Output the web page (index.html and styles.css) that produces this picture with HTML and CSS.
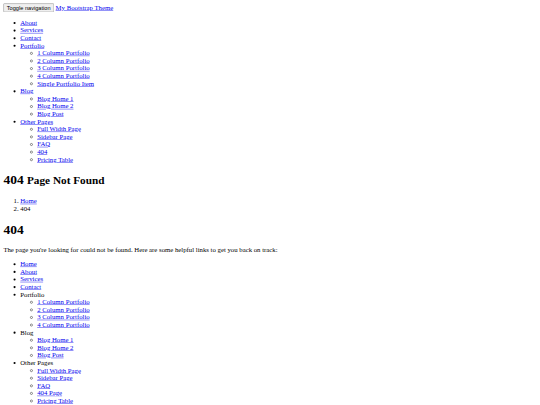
FILE: index.html
```html
<!DOCTYPE html>
<html lang="en">
<head>
<meta charset="utf-8">
<title>404 - My Bootstrap Theme</title>
<link rel="stylesheet" href="styles.css">
</head>
<body class="page-body">
<div class="page">
<nav class="navbar">
  <div class="navbar-header">
    <button type="button" class="navbar-toggle">Toggle navigation</button>
    <a class="navbar-brand" href="#">My Bootstrap Theme</a>
  </div>
  <ul class="list">
    <li><a href="#">About</a></li>
    <li><a href="#">Services</a></li>
    <li><a href="#">Contact</a></li>
    <li><a href="#">Portfolio</a>
      <ul class="list sub">
        <li><a href="#">1 Column Portfolio</a></li>
        <li><a href="#">2 Column Portfolio</a></li>
        <li><a href="#">3 Column Portfolio</a></li>
        <li><a href="#">4 Column Portfolio</a></li>
        <li><a href="#">Single Portfolio Item</a></li>
      </ul>
    </li>
    <li><a href="#">Blog</a>
      <ul class="list sub">
        <li><a href="#">Blog Home 1</a></li>
        <li><a href="#">Blog Home 2</a></li>
        <li><a href="#">Blog Post</a></li>
      </ul>
    </li>
    <li><a href="#">Other Pages</a>
      <ul class="list sub">
        <li><a href="#">Full Width Page</a></li>
        <li><a href="#">Sidebar Page</a></li>
        <li><a href="#">FAQ</a></li>
        <li><a href="#">404</a></li>
        <li><a href="#">Pricing Table</a></li>
      </ul>
    </li>
  </ul>
</nav>

<div class="container">
  <h1 class="page-header">404 <small class="page-sub">Page Not Found</small></h1>
  <ol class="list breadcrumb">
    <li><a href="#">Home</a></li>
    <li>404</li>
  </ol>

  <div class="jumbotron">
    <h1 class="page-header">404</h1>
    <p class="lead">The page you're looking for could not be found. Here are some helpful links to get you back on track:</p>
    <ul class="list">
      <li><a href="#">Home</a></li>
      <li><a href="#">About</a></li>
      <li><a href="#">Services</a></li>
      <li><a href="#">Contact</a></li>
      <li>Portfolio
        <ul class="list sub">
          <li><a href="#">1 Column Portfolio</a></li>
          <li><a href="#">2 Column Portfolio</a></li>
          <li><a href="#">3 Column Portfolio</a></li>
          <li><a href="#">4 Column Portfolio</a></li>
        </ul>
      </li>
      <li>Blog
        <ul class="list sub">
          <li><a href="#">Blog Home 1</a></li>
          <li><a href="#">Blog Home 2</a></li>
          <li><a href="#">Blog Post</a></li>
        </ul>
      </li>
      <li>Other Pages
        <ul class="list sub">
          <li><a href="#">Full Width Page</a></li>
          <li><a href="#">Sidebar Page</a></li>
          <li><a href="#">FAQ</a></li>
          <li><a href="#">404 Page</a></li>
          <li><a href="#">Pricing Table</a></li>
        </ul>
      </li>
    </ul>
  </div>
</div>
</div>
</body>
</html>
```

FILE: styles.css
```css
.page-body {
  margin: 0;
  overflow: hidden;
  font-family: "Liberation Serif", "Times New Roman", serif;
  font-size: 16px;
  line-height: 18px;
  color: #000;
  background: #fff;
}

.page {
  box-sizing: border-box;
  width: 1280px;
  padding: 8px;
  transform: scale(0.421875);
  transform-origin: 0 0;
}

.navbar-toggle {
  font-family: "Liberation Sans", Arial, sans-serif;
  font-size: 13.333px;
}

.list {
  margin: 1em 0;
  padding-left: 40px;
}

.list.sub {
  margin: 0;
  list-style-type: circle;
}

.page-header {
  font-size: 2em;
  line-height: 36px;
  margin: 0.67em 0;
}

.lead {
  margin: 1em 0;
}

a {
  color: #0000ee;
}
```
